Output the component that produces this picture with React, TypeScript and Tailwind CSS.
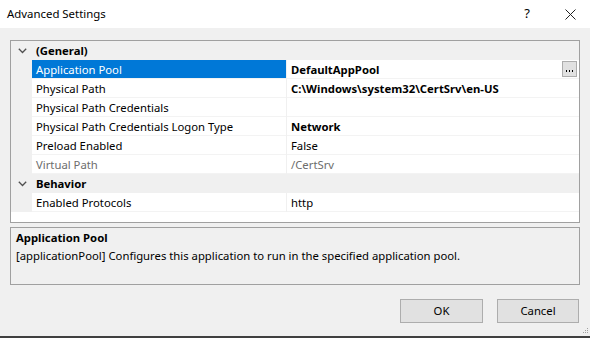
import React from 'react';

type Row =
  | { kind: 'cat'; label: string }
  | { kind: 'prop'; label: string; value: string; bold?: boolean; muted?: boolean; selected?: boolean; browse?: boolean };

const ROWS: Row[] = [
  { kind: 'cat', label: '(General)' },
  { kind: 'prop', label: 'Application Pool', value: 'DefaultAppPool', bold: true, selected: true, browse: true },
  { kind: 'prop', label: 'Physical Path', value: 'C:\\Windows\\system32\\CertSrv\\en-US', bold: true },
  { kind: 'prop', label: 'Physical Path Credentials', value: '' },
  { kind: 'prop', label: 'Physical Path Credentials Logon Type', value: 'Network', bold: true },
  { kind: 'prop', label: 'Preload Enabled', value: 'False' },
  { kind: 'prop', label: 'Virtual Path', value: '/CertSrv', muted: true },
  { kind: 'cat', label: 'Behavior' },
  { kind: 'prop', label: 'Enabled Protocols', value: 'http' },
];

const Chevron = () => (
  <svg width="9" height="6" viewBox="0 0 9 6" className="text-[#505050]">
    <path d="M0.8 0.8 L4.5 4.5 L8.2 0.8" fill="none" stroke="currentColor" strokeWidth="1.3" />
  </svg>
);

const App: React.FC = () => {
  return (
    <div
      className="w-[590px] h-[339px] bg-[#f0f0f0] flex flex-col text-[11.3px] text-black overflow-hidden"
      style={{ fontFamily: '"Segoe UI", "Noto Sans", sans-serif' }}
    >
      {/* title bar */}
      <div className="h-[28px] bg-white flex items-center pl-[7px] shrink-0">
        <span className="flex-1 text-[11.4px]">Advanced Settings</span>
        <span className="w-[20px] text-center text-[13px] mr-[28px]">?</span>
        <svg width="11" height="11" viewBox="0 0 11 11" className="mr-[14px]">
          <path d="M0.5 0.5 L10.5 10.5 M10.5 0.5 L0.5 10.5" stroke="#222" strokeWidth="1" />
        </svg>
      </div>

      <div className="flex-1 flex flex-col px-[10px] pt-[12px] relative">
        {/* property grid */}
        <div className="h-[183px] border border-[#a0a0a0] bg-white flex flex-col">
          {ROWS.map((row, i) =>
            row.kind === 'cat' ? (
              <div key={i} className="h-[19px] flex items-center bg-[#f0f0f0] shrink-0">
                <div className="w-[21px] flex justify-center pl-[1px]">
                  <Chevron />
                </div>
                <span className="pl-[4px] pt-[2px] font-bold">{row.label}</span>
              </div>
            ) : (
              <div key={i} className="h-[19px] flex shrink-0">
                <div className="w-[21px] bg-[#f0f0f0]" />
                <div
                  className={`w-[254px] flex items-center pl-[4px] pt-[2px] border-b border-[#f3f3f3] ${
                    row.selected ? 'bg-[#0078d7] text-white border-[#0078d7]' : row.muted ? 'text-[#6d6d6d]' : ''
                  }`}
                >
                  {row.label}
                </div>
                <div className="w-[1px] bg-[#f0f0f0]" />
                <div
                  className={`flex-1 flex items-center justify-between pl-[4px] pr-[2px] border-b border-[#f3f3f3] ${
                    row.bold ? 'font-bold' : ''
                  } ${row.muted ? 'text-[#6d6d6d]' : ''}`}
                >
                  <span className="pt-[2px]">{row.value}</span>
                  {row.browse && (
                    <div className="w-[15px] h-[16px] bg-[#e1e1e1] border border-[#adadad] flex items-end justify-center pb-[4px] gap-[2px]">
                      <span className="w-[1px] h-[2px] bg-black" />
                      <span className="w-[1px] h-[2px] bg-black" />
                      <span className="w-[1px] h-[2px] bg-black" />
                    </div>
                  )}
                </div>
              </div>
            )
          )}
        </div>

        {/* description pane */}
        <div className="mt-[4px] h-[58px] border border-[#a0a0a0] bg-[#f0f0f0] px-[5px] pt-[1px] leading-[18px]">
          <div className="font-bold">Application Pool</div>
          <div>[applicationPool] Configures this application to run in the specified application pool.</div>
        </div>

        {/* buttons */}
        <div className="mt-[14px] flex justify-end gap-[14px] pr-[1px]">
          <button className="w-[83px] h-[24px] bg-[#e1e1e1] border border-[#adadad]">OK</button>
          <button className="w-[82px] h-[24px] bg-[#e1e1e1] border border-[#adadad]">Cancel</button>
        </div>

        {/* resize grip */}
        <div className="absolute right-[2px] bottom-[3px] grid grid-cols-3 gap-[1px]">
          {[0, 0, 1, 0, 1, 1, 1, 1, 1].map((v, i) => (
            <span key={i} className={`w-[1px] h-[1px] ${v ? 'bg-[#a0a0a0]' : ''}`} />
          ))}
        </div>
      </div>

      <div className="h-[2px] bg-[#404040] shrink-0" />
      <div className="h-[1px] bg-white shrink-0" />
    </div>
  );
};

export default App;
